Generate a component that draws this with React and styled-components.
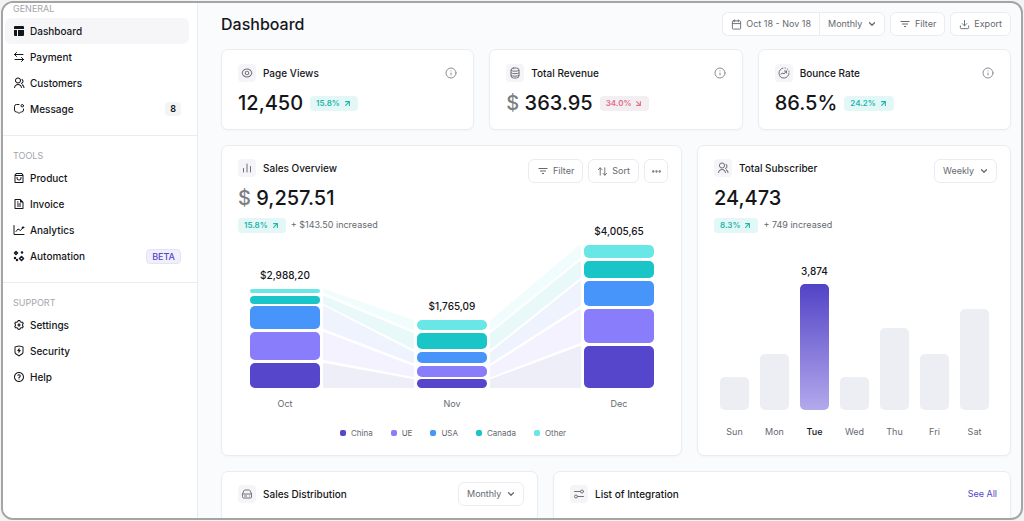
import React from 'react'
import styled, { createGlobalStyle, css } from 'styled-components'
import { ArrowDownRight, ArrowUpDown, ArrowUpRight, Calendar, ChevronDown, Download, Ellipsis, Info } from 'lucide-react'
import {
    RiEyeLine,
    RiFileTextLine,
    RiFilter3Line,
    RiGroupLine,
    RiQuestionLine,
    RiSettings3Line,
    RiShieldFlashLine,
    RiShoppingBag3Line,
} from 'react-icons/ri'

const GlobalStyle = createGlobalStyle`
    :root {
        --ink: #15161a;
        --muted: #666970;
        --faint: #a3a5ab;
        --line: #ebecf0;
        --panel: #fafbfd;
        --white: #ffffff;
        --brand: #5546cb;
        --teal: #1fb5ac;
    }

    *,
    *::before,
    *::after {
        box-sizing: border-box;
    }

    body {
        margin: 0;
        background: #f3f3f3;
        color: var(--ink);
        font-family: Inter, 'Liberation Sans', sans-serif;
        font-size: 9px;
        line-height: 14px;
    }

    h1, h2, p, ul {
        margin: 0;
        padding: 0;
        font-weight: 500;
    }

    button, select {
        font: inherit;
        color: inherit;
        cursor: pointer;
    }

    svg {
        display: block;
        flex-shrink: 0;
    }
`

const Page = styled.div`
    height: 100vh;
    padding: 1px;
`

const Frame = styled.div`
    display: flex;
    height: 100%;
    overflow: hidden;
    border: 2px solid #a4a5a4;
    border-radius: 12px;
    background: var(--panel);
`

/* sidebar */

const Sidebar = styled.nav`
    flex: 0 0 195px;
    background: var(--white);
    border-right: 1px solid var(--line);
`

const Section = styled.section`
    padding: 14px 8px 13px 2px;

    &:first-child {
        padding-top: 0;
    }

    & + & {
        border-top: 1px solid var(--line);
    }
`

const SectionLabel = styled.h2`
    margin: 0 0 3px 8px;
    font-size: 9px;
    font-weight: 400;
    line-height: 12px;
    color: var(--faint);
`

const NavItem = styled.a`
    display: flex;
    align-items: center;
    gap: 5px;
    height: 26px;
    padding: 0 8px;
    border-radius: 6px;
    font-size: 10px;
    font-weight: 500;
    color: var(--ink);
    text-decoration: none;
    background: ${(p) => (p.$active ? '#f6f6f8' : 'transparent')};
`

const NavText = styled.span`
    flex: 1;
`

const Count = styled.span`
    padding: 0 5px;
    border-radius: 4px;
    background: #f3f4f6;
    font-size: 9px;
    font-weight: 600;
`

const Beta = styled.span`
    padding: 0 5px;
    border: 1px solid #e4e3f5;
    border-radius: 4px;
    background: #f0effc;
    color: var(--brand);
    font-size: 9px;
    line-height: 13px;
`

/* controls */

const control = css`
    height: 24px;
    border: 1px solid var(--line);
    border-radius: 6px;
    background: var(--white);
    color: var(--muted);
    font-size: 9px;
    font-weight: 400;
`

const Button = styled.button`
    ${control}
    display: flex;
    align-items: center;
    justify-content: center;
    gap: 4px;
    padding: 0 8px;
    white-space: nowrap;
`

const IconButton = styled(Button)`
    width: 24px;
    padding: 0;
`

const SelectWrap = styled.span`
    position: relative;
    display: inline-flex;

    svg {
        position: absolute;
        top: 7px;
        right: 8px;
        pointer-events: none;
        color: var(--muted);
    }
`

const SelectInput = styled.select`
    ${control}
    appearance: none;
    padding: 0 21px 0 8px;
`

const Joined = styled.div`
    display: flex;

    ${Button} {
        border-radius: 6px 0 0 6px;
        border-right: 0;
    }

    ${SelectInput} {
        border-radius: 0 6px 6px 0;
    }
`

/* content */

const Main = styled.main`
    flex: 1;
    min-width: 0;
    display: flex;
    flex-direction: column;
    gap: 15px;
    padding: 9px 10px 0 23px;
`

const Header = styled.header`
    display: flex;
    align-items: center;
    justify-content: space-between;
    height: 24px;
    margin-bottom: -2px;
`

const Title = styled.h1`
    font-size: 16px;
    line-height: 24px;
`

const Actions = styled.div`
    display: flex;
    gap: 5px;
`

const Row = styled.div`
    display: grid;
    grid-template-columns: ${(p) => p.$columns};
    gap: 15px;
`

const Card = styled.section`
    min-width: 0;
    padding: 13px 13px 15px 16px;
    border: 1px solid var(--line);
    border-radius: 7px;
    background: var(--white);
    box-shadow: 0 1px 2px rgba(20, 22, 40, 0.03);
`

const StatCard = styled(Card)`
    padding: 14px 16px;
`

const ListCard = styled(Card)`
    padding-top: 10px;
`

const CardHead = styled.div`
    display: flex;
    align-items: flex-start;
    justify-content: space-between;
    color: #8b8d94;

    ${StatCard} & {
        align-items: center;
    }

    ${ListCard} & {
        align-items: center;
        min-height: 24px;
    }
`

const CardName = styled.div`
    display: flex;
    align-items: center;
    gap: 7px;
`

const IconBox = styled.span`
    display: flex;
    align-items: center;
    justify-content: center;
    width: 18px;
    height: 18px;
    border-radius: 4px;
    background: #f5f5f7;
    color: #6f727a;
`

const CardTitle = styled.h2`
    font-size: 10px;
    line-height: 18px;
    color: var(--ink);
`

const Figure = styled.p`
    display: flex;
    align-items: center;
    gap: 7px;
    margin-top: ${(p) => (p.$tight ? '3px' : '9px')};
    font-size: 20px;
    line-height: 24px;
`

const Currency = styled.span`
    color: #7c7e85;
`

const Trend = styled.span`
    display: inline-flex;
    align-items: center;
    gap: 3px;
    height: 15px;
    padding: 0 6px;
    border-radius: 4px;
    background: ${(p) => (p.$down ? '#f3eef1' : '#e3f8f6')};
    color: ${(p) => (p.$down ? '#e2708c' : 'var(--teal)')};
    font-size: 8px;
    font-weight: 600;
    line-height: 15px;
`

const Change = styled.p`
    display: flex;
    align-items: center;
    gap: 5px;
    height: 14px;
    margin-top: 8px;
    color: var(--muted);
    font-weight: 400;
`

const SalesSvg = styled.svg`
    width: 100%;
    height: auto;
    margin-top: -10px;
    overflow: visible;
    font-size: 9px;
    text-anchor: middle;
`

const Legend = styled.ul`
    display: flex;
    justify-content: center;
    gap: 18px;
    margin-top: 15px;
    list-style: none;
    font-size: 8px;
    color: var(--muted);
`

const LegendItem = styled.li`
    display: flex;
    align-items: center;
    gap: 5px;
    font-weight: 400;

    &::before {
        content: '';
        width: 6px;
        height: 6px;
        border-radius: 2px;
        background: ${(p) => p.$color};
    }
`

const Bars = styled.div`
    display: flex;
    align-items: flex-end;
    justify-content: space-between;
    height: 207px;
    padding: 0 8px 0 6px;
`

const Day = styled.div`
    display: flex;
    flex-direction: column;
    align-items: center;
    flex: 0 0 29px;
    color: ${(p) => (p.$active ? 'var(--ink)' : 'var(--muted)')};
    font-weight: ${(p) => (p.$active ? 500 : 400)};
`

const DayValue = styled.span`
    font-size: 10px;
`

const Bar = styled.div`
    width: 100%;
    margin: 6px 0 15px;
    border-radius: 5px;
    background: ${(p) => (p.$active ? 'linear-gradient(#5243c6, #b3a9ec)' : '#edeef3')};
`

const SeeAll = styled.a`
    color: var(--brand);
    text-decoration: none;
`

/* icons that the packages lack */

const Glyph = ({ size = 12, children }) => (
    <svg
        width={size}
        height={size}
        viewBox="0 0 24 24"
        fill="none"
        stroke="currentColor"
        strokeWidth="2"
        strokeLinecap="round"
        strokeLinejoin="round"
        aria-hidden="true"
    >
        {children}
    </svg>
)

const DashboardIcon = () => (
    <Glyph>
        <path
            fill="currentColor"
            stroke="none"
            d="M4 2h16a2 2 0 0 1 2 2v4H2V4a2 2 0 0 1 2-2zM2 10h6v12H4a2 2 0 0 1-2-2zM10 10h12v10a2 2 0 0 1-2 2H10z"
        />
    </Glyph>
)

const PaymentIcon = () => (
    <Glyph>
        <path d="M20 7H3M7 3L3 7l4 4M4 17h17M17 13l4 4-4 4" />
    </Glyph>
)

const MessageIcon = () => (
    <Glyph>
        <path d="M12 3H7a4 4 0 0 0-4 4v7a4 4 0 0 0 4 4h2l3 3 3-3h2a4 4 0 0 0 4-4v-2" />
        <circle cx="18.500" cy="5.500" r="2.500" />
    </Glyph>
)

const AnalyticsIcon = () => (
    <Glyph>
        <path d="M2 3v18h20M6 15l4-5 5 3 5-6" />
        <circle cx="20" cy="7" r="1.500" fill="currentColor" />
    </Glyph>
)

const AutomationIcon = () => (
    <Glyph>
        <path d="M6 3l3 3-3 3-3-3zM17 13l4 4-4 4-4-4z" strokeWidth="3" />
        <g fill="currentColor" stroke="none">
            <circle cx="18" cy="5" r="2.500" />
            <circle cx="4" cy="16" r="2.500" />
            <circle cx="8" cy="20" r="2.500" />
        </g>
    </Glyph>
)

const CoinsIcon = () => (
    <Glyph>
        <rect x="4" y="2" width="16" height="20" rx="5" />
        <path d="M4 7c3 2 13 2 16 0M4 12c3 2 13 2 16 0M4 17c3 2 13 2 16 0" />
    </Glyph>
)

const BounceIcon = () => (
    <Glyph>
        <path d="M22 12a10 10 0 1 1-12-9.800" />
        <path strokeDasharray="1 4" d="M14 2a10 10 0 0 1 8 7" />
        <path d="M6 14l4-2 2 2 5-6M13 8h4v4" />
    </Glyph>
)

const ChartIcon = () => (
    <Glyph>
        <path d="M5 20v-7M12 20V4M19 20V9" />
    </Glyph>
)

const DriveIcon = () => (
    <Glyph>
        <path d="M3 12l3-7a2 2 0 0 1 2-1h8a2 2 0 0 1 2 1l3 7v6a2 2 0 0 1-2 2H5a2 2 0 0 1-2-2zM3 12h18M7 16h4M17 16v0" />
    </Glyph>
)

const IntegrationIcon = () => (
    <Glyph>
        <path d="M3 7h12M9 17h12" />
        <circle cx="18" cy="7" r="3" />
        <circle cx="6" cy="17" r="3" />
    </Glyph>
)

/* data */

const sections = [
    {
        label: 'GENERAL',
        items: [
            { name: 'Dashboard', icon: <DashboardIcon />, active: true },
            { name: 'Payment', icon: <PaymentIcon /> },
            { name: 'Customers', icon: <RiGroupLine size={12} /> },
            { name: 'Message', icon: <MessageIcon />, extra: <Count>8</Count> },
        ],
    },
    {
        label: 'TOOLS',
        items: [
            { name: 'Product', icon: <RiShoppingBag3Line size={12} /> },
            { name: 'Invoice', icon: <RiFileTextLine size={12} /> },
            { name: 'Analytics', icon: <AnalyticsIcon /> },
            { name: 'Automation', icon: <AutomationIcon />, extra: <Beta>BETA</Beta> },
        ],
    },
    {
        label: 'SUPPORT',
        items: [
            { name: 'Settings', icon: <RiSettings3Line size={12} /> },
            { name: 'Security', icon: <RiShieldFlashLine size={12} /> },
            { name: 'Help', icon: <RiQuestionLine size={12} /> },
        ],
    },
]

const stats = [
    { name: 'Page Views', icon: <RiEyeLine size={12} />, value: '12,450', trend: '15.8%' },
    { name: 'Total Revenue', icon: <CoinsIcon />, value: '363.95', currency: true, trend: '34.0%', down: true },
    { name: 'Bounce Rate', icon: <BounceIcon />, value: '86.5%', trend: '24.2%' },
]

const series = [
    { name: 'China', color: '#5546cb', tint: '#eeeef8' },
    { name: 'UE', color: '#897dfb', tint: '#f3f2fe' },
    { name: 'USA', color: '#4794fb', tint: '#eff3fe' },
    { name: 'Canada', color: '#19c5c7', tint: '#e9f8f8' },
    { name: 'Other', color: '#69e6e6', tint: '#f1fdfc' },
]

// each band is [top, bottom], listed in the order of the series
const months = [
    { name: 'Oct', total: '$2,988,20', x: 12, bands: [[141, 166], [110, 138], [84, 107], [74, 82], [67, 71]] },
    { name: 'Nov', total: '$1,765,09', x: 179, bands: [[157, 166], [144, 155], [130, 141], [111, 127], [98, 108]] },
    { name: 'Dec', total: '$4,005,65', x: 346, bands: [[124, 166], [87, 121], [59, 84], [39, 56], [23, 36]] },
]

const days = [
    { name: 'Sun', height: 33 },
    { name: 'Mon', height: 56 },
    { name: 'Tue', height: 126, value: '3,874' },
    { name: 'Wed', height: 33 },
    { name: 'Thu', height: 82 },
    { name: 'Fri', height: 56 },
    { name: 'Sat', height: 101 },
]

function Select({ label, options }) {
    return (
        <SelectWrap>
            <SelectInput aria-label={label}>
                {options.map((o) => (
                    <option key={o}>{o}</option>
                ))}
            </SelectInput>
            <ChevronDown size={10} strokeWidth={3} />
        </SelectWrap>
    )
}

function TrendBadge({ value, down }) {
    const Arrow = down ? ArrowDownRight : ArrowUpRight
    return (
        <Trend $down={down}>
            {value}
            <Arrow size={9} strokeWidth={3} />
        </Trend>
    )
}

function Name({ icon, children }) {
    return (
        <CardName>
            <IconBox>{icon}</IconBox>
            <CardTitle>{children}</CardTitle>
        </CardName>
    )
}

function SalesChart() {
    return (
        <SalesSvg viewBox="0 0 430 189" role="img" aria-label="Sales by month and region">
            {months.slice(1).map((to, i) => {
                const from = months[i]
                const left = from.x + 73
                const right = to.x - 3
                return series.map((s, n) => {
                    const [a, b] = from.bands[n]
                    const [c, d] = to.bands[n]
                    return (
                        <path
                            key={to.name + s.name}
                            d={`M${left + 1} ${a + 1}L${right - 1} ${c + 1}V${d - 1}L${left + 1} ${b - 1}Z`}
                            fill={s.tint}
                            stroke={s.tint}
                            strokeWidth="2"
                            strokeLinejoin="round"
                        />
                    )
                })
            })}
            {months.map((m) => (
                <g key={m.name}>
                    {m.bands.map(([top, bottom], n) => (
                        <rect
                            key={series[n].name}
                            x={m.x}
                            y={top}
                            width="70"
                            height={bottom - top}
                            rx={Math.min(5, (bottom - top) / 2)}
                            fill={series[n].color}
                        />
                    ))}
                    <text x={m.x + 35} y={m.bands[4][0] - 10} fontSize="10" fontWeight="500" fill="#15161a">
                        {m.total}
                    </text>
                    <text x={m.x + 35} y="185" fill="#666970">
                        {m.name}
                    </text>
                </g>
            ))}
        </SalesSvg>
    )
}

function App() {
    return (
        <Page>
            <GlobalStyle />
            <Frame>
                <Sidebar>
                    {sections.map((section) => (
                        <Section key={section.label}>
                            <SectionLabel>{section.label}</SectionLabel>
                            {section.items.map((item) => (
                                <NavItem key={item.name} href="#" $active={item.active}>
                                    {item.icon}
                                    <NavText>{item.name}</NavText>
                                    {item.extra}
                                </NavItem>
                            ))}
                        </Section>
                    ))}
                </Sidebar>
                <Main>
                    <Header>
                        <Title>Dashboard</Title>
                        <Actions>
                            <Joined>
                                <Button>
                                    <Calendar size={11} />
                                    Oct 18 - Nov 18
                                </Button>
                                <Select label="Period" options={['Monthly', 'Weekly']} />
                            </Joined>
                            <Button>
                                <RiFilter3Line size={12} />
                                Filter
                            </Button>
                            <Button>
                                <Download size={11} />
                                Export
                            </Button>
                        </Actions>
                    </Header>
                    <Row $columns="repeat(3, 1fr)">
                        {stats.map((s) => (
                            <StatCard key={s.name}>
                                <CardHead>
                                    <Name icon={s.icon}>{s.name}</Name>
                                    <Info size={12} />
                                </CardHead>
                                <Figure>
                                    <span>
                                        {s.currency && <Currency>$ </Currency>}
                                        {s.value}
                                    </span>
                                    <TrendBadge value={s.trend} down={s.down} />
                                </Figure>
                            </StatCard>
                        ))}
                    </Row>
                    <Row $columns="461fr 314fr">
                        <Card>
                            <CardHead>
                                <Name icon={<ChartIcon />}>Sales Overview</Name>
                                <Actions>
                                    <Button>
                                        <RiFilter3Line size={12} />
                                        Filter
                                    </Button>
                                    <Button>
                                        <ArrowUpDown size={11} />
                                        Sort
                                    </Button>
                                    <IconButton aria-label="More">
                                        <Ellipsis size={11} strokeWidth={3} />
                                    </IconButton>
                                </Actions>
                            </CardHead>
                            <Figure $tight>
                                <span>
                                    <Currency>$ </Currency>
                                    9,257.51
                                </span>
                            </Figure>
                            <Change>
                                <TrendBadge value="15.8%" />+ $143.50 increased
                            </Change>
                            <SalesChart />
                            <Legend>
                                {series.map((s) => (
                                    <LegendItem key={s.name} $color={s.color}>
                                        {s.name}
                                    </LegendItem>
                                ))}
                            </Legend>
                        </Card>
                        <Card>
                            <CardHead>
                                <Name icon={<RiGroupLine size={12} />}>Total Subscriber</Name>
                                <Select label="Subscriber period" options={['Weekly', 'Daily']} />
                            </CardHead>
                            <Figure $tight>24,473</Figure>
                            <Change>
                                <TrendBadge value="8.3%" />+ 749 increased
                            </Change>
                            <Bars>
                                {days.map((d) => (
                                    <Day key={d.name} $active={!!d.value}>
                                        {d.value && <DayValue>{d.value}</DayValue>}
                                        <Bar $active={!!d.value} style={{ height: d.height }} />
                                        {d.name}
                                    </Day>
                                ))}
                            </Bars>
                        </Card>
                    </Row>
                    <Row $columns="317fr 458fr">
                        <ListCard>
                            <CardHead>
                                <Name icon={<DriveIcon />}>Sales Distribution</Name>
                                <Select label="Distribution period" options={['Monthly', 'Weekly']} />
                            </CardHead>
                        </ListCard>
                        <ListCard>
                            <CardHead>
                                <Name icon={<IntegrationIcon />}>List of Integration</Name>
                                <SeeAll href="#">See All</SeeAll>
                            </CardHead>
                        </ListCard>
                    </Row>
                </Main>
            </Frame>
        </Page>
    )
}

export default App
